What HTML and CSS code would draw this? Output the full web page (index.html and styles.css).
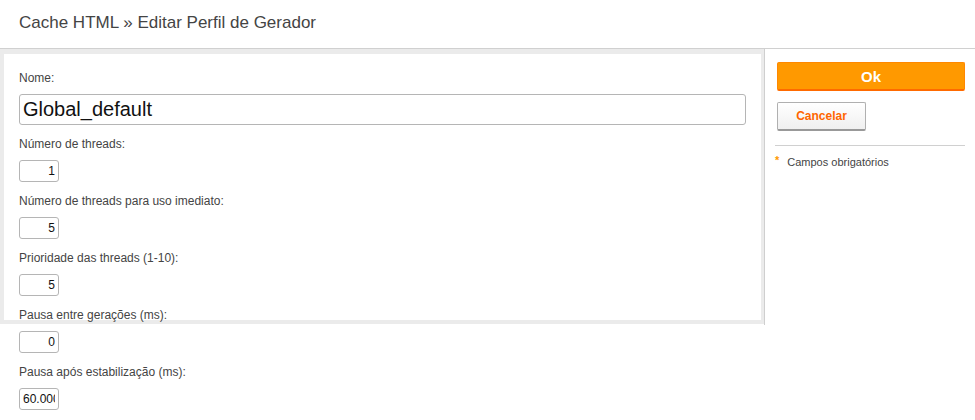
FILE: index.html
```html
<!DOCTYPE html>
<html lang="pt">
  <head>
    <meta charset="UTF-8" />
    <meta name="viewport" content="width=device-width, initial-scale=1.0" />
    <link rel="stylesheet" href="styles.css">
  </head>
  <body>
    <div class="header">
      <h1 class="title">Cache HTML &raquo; Editar Perfil de Gerador</h1>
    </div>
    <div class="main">
      <div class="content">
        <form class="panel" onsubmit="event.preventDefault();">
          <div class="field">
            <label for="nome">Nome:</label>
            <input type="text" id="nome" class="big" value="Global_default" />
          </div>
          <div class="field">
            <label for="threads">Número de threads:</label>
            <input type="text" id="threads" class="num" value="1" />
          </div>
          <div class="field">
            <label for="imediato">Número de threads para uso imediato:</label>
            <input type="text" id="imediato" class="num" value="5" />
          </div>
          <div class="field">
            <label for="prioridade">Prioridade das threads (1-10):</label>
            <input type="text" id="prioridade" class="num" value="5" />
          </div>
          <div class="field">
            <label for="pausa">Pausa entre gerações (ms):</label>
            <input type="text" id="pausa" class="num" value="0" />
          </div>
          <div class="field">
            <label for="estab">Pausa após estabilização (ms):</label>
            <input type="text" id="estab" class="num" value="60.000" />
          </div>
        </form>
      </div>
      <div class="sidebar">
        <button type="button" class="okbtn">Ok</button>
        <button type="button" class="cancelbtn">Cancelar</button>
        <div class="legend"><span class="star">*</span>Campos obrigatórios</div>
      </div>
    </div>
  </body>
</html>
```

FILE: styles.css
```css
* {
  box-sizing: border-box;
}
body {
  margin: 0;
  font-family: "Liberation Sans", Arial, sans-serif;
  color: #444;
  background: #fff;
}
.header {
  height: 49px;
  border-bottom: 1px solid #d0d0d0;
  padding-left: 19px;
  display: flex;
  align-items: center;
}
.title {
  margin: 0 0 2px 0;
  font-size: 17px;
  font-weight: normal;
  color: #444;
}
.main {
  display: flex;
  align-items: flex-start;
}
/* gray frame + white panel, fixed 276px tall; fields run past it */
.content {
  width: 765px;
  padding: 21px 19px 10px 19px;
  background:
    linear-gradient(#cfcfcf, #cfcfcf) 764px 0 / 1px 276px no-repeat,
    linear-gradient(#fff, #fff) 4px 5px / 757px 266px no-repeat,
    linear-gradient(#ebebeb, #ebebeb) 0 0 / 764px 275px no-repeat;
}
.field {
  margin-bottom: 11px;
}
.field label {
  display: block;
  font-size: 12px;
  line-height: 17px;
  margin-bottom: 7px;
  color: #444;
}
.field input {
  display: block;
  border: 1px solid #b5b5b5;
  border-radius: 3px;
  font-family: "Liberation Sans", Arial, sans-serif;
  color: #111;
  background: #fff;
}
.big {
  width: 100%;
  height: 31px;
  font-size: 20px;
  padding: 0 3px;
}
.num {
  width: 40px;
  height: 22px;
  font-size: 12px;
  text-align: right;
  padding: 0 3px;
}
.sidebar {
  flex: 1;
  padding: 13px 10px 0 12px;
}
.okbtn {
  display: block;
  width: 100%;
  height: 29px;
  background: #ff9900;
  border: 1px solid #ff8800;
  border-bottom: 2px solid #ff6a00;
  border-radius: 2px;
  color: #fff;
  font-family: "Liberation Sans", Arial, sans-serif;
  font-weight: bold;
  font-size: 15px;
  cursor: pointer;
}
.cancelbtn {
  display: block;
  margin-top: 11px;
  width: 89px;
  height: 29px;
  background: linear-gradient(#ffffff, #f0f0f0);
  border: 1px solid #b0b0b0;
  border-bottom: 2px solid #999;
  border-radius: 2px;
  color: #ff6600;
  font-family: "Liberation Sans", Arial, sans-serif;
  font-weight: bold;
  font-size: 12px;
  cursor: pointer;
}
.legend {
  margin: 14px 0 0 -2px;
  border-top: 1px solid #d0d0d0;
  padding-top: 10px;
  font-size: 11px;
  color: #444;
}
.star {
  color: #ff9900;
  font-weight: bold;
  margin-right: 8px;
  position: relative;
  top: -2px;
}
```
